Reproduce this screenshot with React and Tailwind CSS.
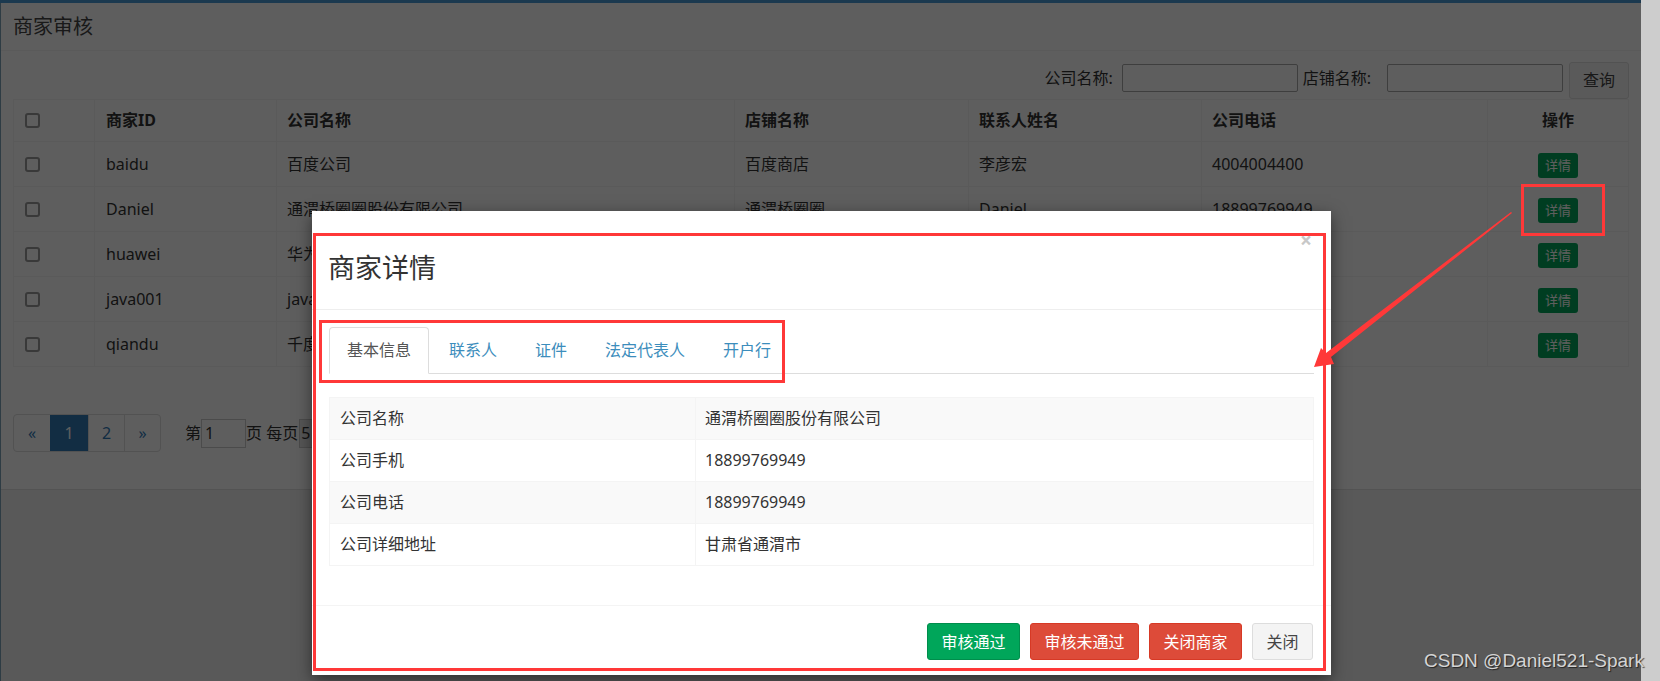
import React from 'react';

const merchants = [
  { id: 'baidu', company: '百度公司', shop: '百度商店', contact: '李彦宏', phone: '4004004400' },
  { id: 'Daniel', company: '通渭桥圈圈股份有限公司', shop: '通渭桥圈圈', contact: 'Daniel', phone: '18899769949' },
  { id: 'huawei', company: '华为技术有限公司', shop: '华为旗舰店', contact: '任正非', phone: '4008302118' },
  { id: 'java001', company: 'java001科技有限公司', shop: 'java001商店', contact: 'java001', phone: '13800138000' },
  { id: 'qiandu', company: '千度公司', shop: '千度商店', contact: '千度', phone: '4004004401' },
];

const details = [
  ['公司名称', '通渭桥圈圈股份有限公司'],
  ['公司手机', '18899769949'],
  ['公司电话', '18899769949'],
  ['公司详细地址', '甘肃省通渭市'],
];

const tabs = ['基本信息', '联系人', '证件', '法定代表人', '开户行'];

function Checkbox() {
  return <span className="block h-[15px] w-[15px] rounded-[3px] border-2 border-[#9a9a9a] bg-white" />;
}

function MerchantTable() {
  const th = 'h-[42px] border border-[#f4f4f4] px-[10px] text-[16px] font-bold leading-[23px] text-[#333]';
  const td = 'h-[45px] border border-[#f4f4f4] px-[10px] text-[16px] leading-[23px] text-[#333]';
  return (
    <table className="w-full table-fixed border-collapse">
      <thead>
        <tr>
          <th className={`${th} w-[81px] pl-[11px] text-left`}><Checkbox /></th>
          <th className={`${th} w-[182px] pl-[11px] text-left`}>商家ID</th>
          <th className={`${th} w-[458px] text-left`}>公司名称</th>
          <th className={`${th} w-[234px] text-left`}>店铺名称</th>
          <th className={`${th} w-[233px] text-left`}>联系人姓名</th>
          <th className={`${th} w-[286px] text-left`}>公司电话</th>
          <th className={`${th} w-[141px] text-center`}>操作</th>
        </tr>
      </thead>
      <tbody>
        {merchants.map((m) => (
          <tr key={m.id}>
            <td className={`${td} pl-[11px]`}><Checkbox /></td>
            <td className={`${td} pl-[11px]`}>{m.id}</td>
            <td className={td}>{m.company}</td>
            <td className={td}>{m.shop}</td>
            <td className={td}>{m.contact}</td>
            <td className={td}>{m.phone}</td>
            <td className={`${td} text-center`}>
              <span className="mt-[2px] inline-flex h-[25px] w-[40px] items-center justify-center rounded-[3px] bg-[#00a65a] text-[13px] leading-none text-white">详情</span>
            </td>
          </tr>
        ))}
      </tbody>
    </table>
  );
}

function Page() {
  return (
    <div className="relative flex w-[1641px] flex-col bg-[#f0f0f0]">
      <div className="h-[3px] bg-[#4b9bd5]" />
      <div className="flex flex-1">
        <div className="w-[2px] bg-[#7da3b8]" />
        <div className="flex-1">
          <section className="border-b border-[#e2e2e2] bg-white">
            <div className="flex h-[48px] items-center border-b border-[#f4f4f4] pl-[12px] text-[20px] leading-[24px] text-[#444]">
              商家审核
            </div>
            <div className="px-[12px] pb-[37px] pt-[11px]">
              <div className="flex h-[37px] items-start justify-end text-[16px] leading-[23px] text-[#333]">
                <span className="mt-[5px]">公司名称:</span>
                <span className="ml-[9px] mt-[2px] h-[28px] w-[176px] rounded-[2px] border border-[#a9a9a9] bg-white" />
                <span className="ml-[5px] mt-[5px]">店铺名称:</span>
                <span className="ml-[16px] mt-[2px] h-[28px] w-[176px] rounded-[2px] border border-[#a9a9a9] bg-white" />
                <button className="ml-[6px] h-[37px] w-[60px] rounded-[3px] border border-[#ddd] bg-[#f4f4f4] text-[16px] text-[#444]">查询</button>
              </div>
              <MerchantTable />
              <div className="mt-[47px] flex items-center text-[16px] leading-[23px] text-[#333]">
                <div className="flex h-[38px] overflow-hidden rounded-[4px] border border-[#ddd]">
                  <span className="flex w-[36px] items-center justify-center text-[#337ab7]">«</span>
                  <span className="flex w-[38px] items-center justify-center bg-[#337ab7] text-white">1</span>
                  <span className="flex w-[36px] items-center justify-center border-l border-[#ddd] text-[#337ab7]">2</span>
                  <span className="flex w-[36px] items-center justify-center border-l border-[#ddd] text-[#337ab7]">»</span>
                </div>
                <span className="ml-[24px]">第</span>
                <span className="flex h-[29px] w-[45px] items-center border border-[#ccc] bg-white pl-[3px]">1</span>
                <span>页 每页</span>
                <span className="ml-[1px] flex h-[29px] w-[50px] items-center border border-[#ccc] bg-[#e6e6e6] pl-[1px]">5</span>
              </div>
            </div>
          </section>
        </div>
      </div>
      <div className="absolute inset-0 bg-black/[0.63]" />
    </div>
  );
}

function DetailModal() {
  const btn = 'h-[37px] rounded-[3px] border px-[13.5px] text-[16px]';
  return (
    <div className="absolute left-[312px] top-[211px] w-[1019px] bg-white shadow-[0_5px_15px_rgba(0,0,0,0.5)]">
      <div className="relative h-[99px] border-b border-[#eee] pl-[16px] pt-[41px]">
        <span className="absolute right-[19px] top-[19px] text-[21px] font-bold leading-none text-[#c8c8c8]">×</span>
        <h4 className="text-[27px] font-normal leading-[32px] text-[#333]">商家详情</h4>
      </div>
      <div className="px-[17px] pb-[39px] pt-[17px]">
        <ul className="flex border-b border-[#ddd]">
          {tabs.map((t, i) => (
            <li key={t} className="-mb-px mr-[2px]">
              <span
                className={
                  i === 0
                    ? 'flex h-[47px] items-center rounded-t-[4px] border border-[#ddd] border-b-white bg-white px-[17px] text-[16px] leading-[23px] text-[#555]'
                    : 'flex h-[47px] items-center border border-transparent px-[17px] text-[16px] leading-[23px] text-[#3c8dbc]'
                }
              >
                {t}
              </span>
            </li>
          ))}
        </ul>
        <table className="mt-[23px] w-full border-collapse border border-[#f4f4f4]">
          <tbody>
            {details.map(([k, v], i) => (
              <tr key={k} className={i % 2 === 0 ? 'bg-[#f9f9f9]' : 'bg-white'}>
                <td className="h-[42px] w-[366px] border border-[#f4f4f4] px-[10px] text-[16px] leading-[23px] text-[#333]">{k}</td>
                <td className="h-[42px] border border-[#f4f4f4] px-[9px] text-[16px] leading-[23px] text-[#333]">{v}</td>
              </tr>
            ))}
          </tbody>
        </table>
      </div>
      <div className="flex justify-end gap-[10px] border-t border-[#f4f4f4] pb-[15px] pr-[18px] pt-[17px]">
        <button className={`${btn} border-[#008d4c] bg-[#00a65a] text-white`}>审核通过</button>
        <button className={`${btn} border-[#d73925] bg-[#dd4b39] text-white`}>审核未通过</button>
        <button className={`${btn} border-[#d73925] bg-[#dd4b39] text-white`}>关闭商家</button>
        <button className={`${btn} border-[#ddd] bg-[#f4f4f4] text-[#444]`}>关闭</button>
      </div>
    </div>
  );
}

export default function App() {
  return (
    <div className="relative flex h-[681px] w-[1660px] overflow-hidden font-['Noto_Sans','Noto_Sans_CJK_SC',sans-serif]">
      <Page />
      <div className="w-[19px] bg-[#cdcdcd]" />

      <DetailModal />

      {/* screenshot annotations */}
      <div className="pointer-events-none absolute left-[313px] top-[233px] h-[438px] w-[1013px] border-[3px] border-[#ff3838]" />
      <div className="pointer-events-none absolute left-[319px] top-[320px] h-[63px] w-[466px] border-[3px] border-[#ff3838]" />
      <div className="pointer-events-none absolute left-[1521px] top-[184px] h-[52px] w-[84px] border-[3px] border-[#ff3838]" />
      <svg className="pointer-events-none absolute left-0 top-0" width="1660" height="681">
        <polygon
          fill="#ff3838"
          points="1512,213 1331,357 1334,364 1314,367 1321,348 1326,353 1511,212"
        />
      </svg>

      <span className="absolute left-[1424px] top-[651px] text-[19px] leading-none text-[#d4d4d4] [text-shadow:1px_1px_1px_rgba(0,0,0,0.6)] font-['Liberation_Sans',sans-serif]">
        CSDN @Daniel521-Spark
      </span>
    </div>
  );
}
